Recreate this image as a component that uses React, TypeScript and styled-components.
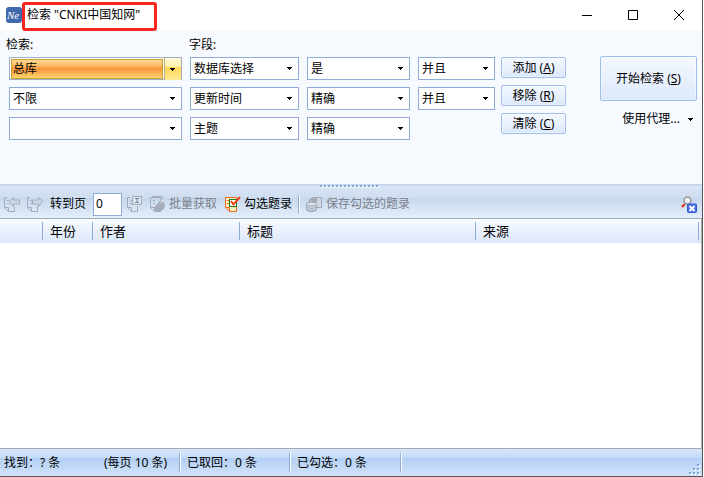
import React from 'react';
import styled, { createGlobalStyle } from 'styled-components';

const Global = createGlobalStyle`
  * { box-sizing: border-box; }
  body { margin: 0; background: #fff; }
  body, button, input, select {
    font: 12px/18px "Noto Sans", "Noto Sans CJK SC", sans-serif;
    color: #000;
  }
`;

const Window = styled.div`
  display: flex;
  flex-direction: column;
  min-height: 100vh;
  margin-right: 1px;
  border-right: 1px solid #555;
  border-bottom: 1px solid #555;
`;

const TitleBar = styled.header`
  display: flex;
  align-items: center;
  height: 30px;
  padding-left: 6px;
  background: #fff;
`;

const Title = styled.h1`
  position: relative;
  flex: 1;
  margin: 0 0 0 5px;
  font-size: 12px;
  font-weight: 400;
`;

const Highlight = styled.span`
  position: absolute;
  left: -5px;
  top: -4px;
  z-index: 1;
  width: 135px;
  height: 29px;
  border: 3px solid #f92620;
  border-radius: 3px;
  pointer-events: none;
`;

const WindowButton = styled.button`
  display: grid;
  place-items: center;
  width: 46px;
  height: 28px;
  padding: 0;
  border: 0;
  background: none;
`;

const SearchPanel = styled.section`
  display: flex;
  align-items: flex-start;
  height: 154px;
  padding: 6px 5px 0 9px;
  background: #f6f9fe;
`;

const Criteria = styled.div`
  flex: 1;
  display: grid;
  grid-template-columns: 173fr 109fr 103fr 77fr;
  grid-template-rows: 14px repeat(3, 23px);
  gap: 7px 8px;
`;

const Label = styled.label<{ $outdent?: boolean }>`
  margin-left: ${p => (p.$outdent ? '-3px' : '-1px')};
`;

const Combo = styled.div<{ $row: number; $active?: boolean }>`
  grid-row: ${p => p.$row};
  display: grid;
  min-width: 0;
  grid-template-columns: minmax(0, 1fr) 17px;
  border: 1px solid ${p => (p.$active ? '#9fb0c4' : '#8fabd8')};
  background: #fff;

  select {
    grid-area: 1 / 1 / 2 / 3;
    min-width: 0;
    appearance: none;
    margin: ${p => (p.$active ? '1px 18px 1px 1px' : '0')};
    padding: ${p => (p.$active ? '0 0 0 1px' : '0 0 0 3px')};
    border: ${p => (p.$active ? '1px solid #c9a22e' : '0')};
    border-radius: 0;
    outline: 0;
    background: ${p => (p.$active
      ? 'linear-gradient(#fbd794 0, #fcbd6a 30%, #f9973a 48%, #fbac50 68%, #fed56c 100%)'
      : 'transparent')};
  }
  svg { display: block; }
`;

const Arrow = styled.span<{ $active?: boolean }>`
  grid-area: 1 / 2;
  display: grid;
  place-items: center;
  padding-right: 1px;
  pointer-events: none;
  border-left: 1px solid ${p => (p.$active ? '#b9ad75' : 'transparent')};
  background: ${p => (p.$active
    ? 'linear-gradient(#fffad9 0, #ffefa9 40%, #ffd75a 42%, #ffe890 100%)'
    : 'transparent')};
`;

const ButtonColumn = styled.div`
  display: grid;
  gap: 7px;
  width: 65px;
  margin: 21px 34px 0 6px;
`;

const PushButton = styled.button<{ $large?: boolean }>`
  height: ${p => (p.$large ? '45px' : '21px')};
  padding: 0;
  border: 1px solid #9fbfea;
  border-radius: 2px;
  box-shadow: inset 0 0 0 1px #ffffff66;
  background: linear-gradient(#f4f8fe, #e9f1fd 50%, #dce8fa);
  white-space: nowrap;
`;

const StartColumn = styled.div`
  display: grid;
  gap: 9px;
  width: 97px;
  margin-top: 20px;
`;

const ProxyButton = styled.button`
  display: flex;
  align-items: center;
  justify-content: flex-end;
  gap: 8px;
  padding: 0 4px 0 0;
  border: 0;
  background: none;
`;

const Splitter = styled.div`
  display: flex;
  justify-content: center;
  height: 5px;
  padding-right: 2px;
  background: linear-gradient(#bccfe8, #dfe9f7 60%, #d5e2f3);
`;

const Toolbar = styled.div`
  display: flex;
  align-items: center;
  height: 30px;
  padding: 1px 5px 0 3px;
  border-bottom: 1px solid #a5a9b3;
  background: linear-gradient(#d5e2f3 0, #cfdef0 29%, #c7d8ed 31%, #e3eefb 100%);
`;

const ToolButton = styled.button<{ $gap?: number }>`
  display: flex;
  align-items: center;
  gap: 3px;
  margin-right: ${p => p.$gap ?? 6}px;
  padding: 0;
  border: 0;
  background: none;
  white-space: nowrap;
  &:disabled { color: #7c8088; }
`;

const PageInput = styled.input`
  width: 29px;
  height: 23px;
  margin: 0 4px 0 7px;
  padding: 0 0 1px 2px;
  border: 1px solid #8fabd8;
  outline: 0;
  background: #fff;
`;

const Divider = styled.span<{ $gap?: number }>`
  width: 2px;
  height: 19px;
  margin-right: ${p => p.$gap ?? 6}px;
  border-left: 1px solid #8fabd8;
  border-right: 1px solid #fff;
`;

const Spacer = styled.span`
  flex: 1;
`;

const Results = styled.main`
  flex: 1;
  border-right: 1px solid #b0b0b0;
  background: #fff;
`;

const Table = styled.table`
  width: 100%;
  table-layout: fixed;
  border-collapse: collapse;
  background: linear-gradient(#f8fbff, #dbe7fa);
`;

const HeadCell = styled.th<{ $width?: number }>`
  width: ${p => (p.$width ? `${p.$width}px` : 'auto')};
  height: 24px;
  padding: 3px 0;
  font-size: 13px;
  line-height: 18px;
  font-weight: 400;
  text-align: left;

  span {
    display: block;
    height: 18px;
    padding-left: 7px;
    border-right: 1px solid #8fabd8;
  }
  &:last-child span { margin-right: 2px; }
`;

const StatusBar = styled.footer`
  display: flex;
  align-items: center;
  height: 28px;
  padding: 0 2px 0 4px;
  border-top: 1px solid #a5a9b3;
  background: linear-gradient(#d7e5f8 0, #c7dcf7 31%, #b4d0f5 34%, #d1e3f9 100%);
`;

const StatusText = styled.span<{ $width: number }>`
  width: ${p => p.$width}px;
  padding-top: 1px;
  white-space: nowrap;
`;

const Grip = styled.svg`
  align-self: flex-end;
  margin-bottom: 1px;
`;

const Triangle = () => (
  <svg width="5" height="3" viewBox="0 0 5 3" shapeRendering="crispEdges" aria-hidden="true">
    <path d="M0 0h5v1H4v1H3v1H2V2H1V1H0z" />
  </svg>
);

const AppLogo = () => (
  <svg width="16" height="16" viewBox="0 0 16 16" aria-hidden="true">
    <rect width="16" height="16" rx="3" fill="#4167ad" />
    <text x="1" y="12" fill="#fff" fontFamily="Liberation Serif, serif" fontStyle="italic" fontSize="11">Ne</text>
  </svg>
);

const Page = ({ children }: { children?: React.ReactNode }) => (
  <svg width="17" height="17" viewBox="0 0 17 17" fill="none" stroke="#a3acb8" aria-hidden="true">
    <path d="M4 1.500H1.500v10l4 4h6v-5M1.500 11.500h4v4M4 4.500h2M4 7.500h2" />
    {children}
  </svg>
);

const PrevIcon = () => (
  <Page><path d="M6.500 5.500l4-4v2.500h6v4h-6v2.500z" fill="#cdd7e3" /></Page>
);

const NextIcon = () => (
  <Page><path d="M16.500 5.500l-4-4v2.500h-6v4h6v2.500z" fill="#cdd7e3" /></Page>
);

const GoIcon = () => (
  <Page>
    <rect x="6.500" y=".5" width="9" height="8" fill="#dce4ee" />
    <path d="M9 2.500h4M11 2.500v4M9 6.500h4" stroke="#7d8794" />
  </Page>
);

const BatchIcon = () => (
  <Page>
    <path d="M3.500 1.500v-1h10v3M4 1.500h7.500v4" />
    <path d="M6 13c-1-3 3-4 5-8 1 2-1 3 0 4 1-2 3-2 3-3 2 3 2 6-1 8-2 2-6 2-7-1z" fill="#a3acb8" />
  </Page>
);

const CheckIcon = () => (
  <svg width="17" height="17" viewBox="0 0 17 17" fill="none" aria-hidden="true">
    <path d="M1.500 1.500h11v14h-7l-4-4z" fill="#ffedc4" stroke="#ee6a1b" />
    <path d="M1.500 11.500h4v4M3 4.500h2M3 7.500h2" stroke="#ee6a1b" />
    <rect x="5.500" y="3.500" width="7" height="7" fill="#fff" stroke="#138413" />
    <path d="M7 5l2.500 3.500L16 1" stroke="#f0401c" strokeWidth="2" />
  </svg>
);

const SaveIcon = () => (
  <svg width="17" height="17" viewBox="0 0 17 17" fill="#cfd8e2" stroke="#a0a9b5" aria-hidden="true">
    <path d="M6.500 1.500h9v10h-6" />
    <path d="M.5 8v5c0 3.500 10 3.500 10 0V8" />
    <path d="M.5 10.500c1 2.500 9 2.500 10 0M.5 13c1 2.500 9 2.500 10 0" fill="none" />
    <ellipse cx="5.500" cy="8" rx="5" ry="2" fill="#dde4ec" />
    <path d="M3 7c0-4 3-6 6-4l1.500-1.500v5h-5l1.500-1.500c-2-1-3 0-4 2z" fill="#a0a9b5" />
  </svg>
);

const ClearSearchIcon = () => (
  <svg width="16" height="17" viewBox="0 0 16 17" fill="none" aria-hidden="true">
    <path d="M4 8L.8 11" stroke="#d43b16" strokeWidth="2" />
    <circle cx="6.500" cy="4.500" r="3.500" fill="#eef2f7" stroke="#93989e" strokeWidth="1.500" />
    <rect x="6.500" y="8" width="9" height="8.500" rx="1" fill="#4770e8" stroke="#3158d2" />
    <path d="M8.500 10l5 5M13.500 10l-5 5" stroke="#fff" strokeWidth="2" />
  </svg>
);

interface FieldSpec {
  row: number;
  value: string;
  name: string;
  id?: string;
  active?: boolean;
}

const fields: FieldSpec[] = [
  { row: 2, value: '总库', name: '检索词 1', id: 'term', active: true },
  { row: 2, value: '数据库选择', name: '字段 1', id: 'field' },
  { row: 2, value: '是', name: '匹配 1' },
  { row: 2, value: '并且', name: '逻辑 1' },
  { row: 3, value: '不限', name: '检索词 2' },
  { row: 3, value: '更新时间', name: '字段 2' },
  { row: 3, value: '精确', name: '匹配 2' },
  { row: 3, value: '并且', name: '逻辑 2' },
  { row: 4, value: '', name: '检索词 3' },
  { row: 4, value: '主题', name: '字段 3' },
  { row: 4, value: '精确', name: '匹配 3' },
];

const columns = [
  { title: '', width: 43 },
  { title: '年份', width: 50 },
  { title: '作者', width: 147 },
  { title: '标题', width: 236 },
  { title: '来源' },
];

const gripDots = [[8, 0], [4, 4], [8, 4], [0, 8], [4, 8], [8, 8]];

export default function App() {
  return (
    <Window>
      <Global />
      <TitleBar>
        <AppLogo />
        <Title>检索 "CNKI中国知网"<Highlight /></Title>
        <WindowButton aria-label="最小化">
          <svg width="10" height="10"><path d="M0 5.500h10" stroke="#000" /></svg>
        </WindowButton>
        <WindowButton aria-label="最大化">
          <svg width="10" height="10"><path d="M.5.5h9v9h-9z" fill="none" stroke="#000" /></svg>
        </WindowButton>
        <WindowButton aria-label="关闭">
          <svg width="10" height="10"><path d="M0 0l10 10M10 0L0 10" stroke="#000" /></svg>
        </WindowButton>
      </TitleBar>

      <SearchPanel>
        <Criteria>
          <Label $outdent htmlFor="term">检索:</Label>
          <Label htmlFor="field">字段:</Label>
          {fields.map(f => (
            <Combo key={f.name} $row={f.row} $active={f.active}>
              <select id={f.id} aria-label={f.id ? undefined : f.name} defaultValue={f.value}>
                <option value={f.value}>{f.value}</option>
              </select>
              <Arrow $active={f.active}><Triangle /></Arrow>
            </Combo>
          ))}
        </Criteria>
        <ButtonColumn>
          <PushButton>添加 (<u>A</u>)</PushButton>
          <PushButton>移除 (<u>R</u>)</PushButton>
          <PushButton>清除 (<u>C</u>)</PushButton>
        </ButtonColumn>
        <StartColumn>
          <PushButton $large>开始检索 (<u>S</u>)</PushButton>
          <ProxyButton>使用代理...<Triangle /></ProxyButton>
        </StartColumn>
      </SearchPanel>

      <Splitter>
        <svg width="60" height="4" shapeRendering="crispEdges" aria-hidden="true">
          <path d="M1 3h60" stroke="#fff" strokeWidth="2" strokeDasharray="2 2" />
          <path d="M0 2h60" stroke="#86a8d8" strokeWidth="2" strokeDasharray="2 2" />
        </svg>
      </Splitter>
      <Toolbar role="toolbar">
        <ToolButton disabled aria-label="上一页"><PrevIcon /></ToolButton>
        <ToolButton disabled $gap={7} aria-label="下一页"><NextIcon /></ToolButton>
        <label htmlFor="page">转到页</label>
        <PageInput id="page" defaultValue="0" />
        <ToolButton disabled aria-label="转到"><GoIcon /></ToolButton>
        <ToolButton disabled $gap={7}><BatchIcon />批量获取</ToolButton>
        <ToolButton><CheckIcon />勾选题录</ToolButton>
        <Divider />
        <ToolButton disabled><SaveIcon />保存勾选的题录</ToolButton>
        <Spacer />
        <ToolButton $gap={0} aria-label="清除搜索"><ClearSearchIcon /></ToolButton>
      </Toolbar>

      <Results>
        <Table>
          <thead>
            <tr>
              {columns.map(c => (
                <HeadCell key={c.title} $width={c.width} scope="col"><span>{c.title}</span></HeadCell>
              ))}
            </tr>
          </thead>
        </Table>
      </Results>

      <StatusBar>
        <StatusText $width={100}>找到：? 条</StatusText>
        <StatusText $width={75}>(每页 10 条)</StatusText>
        <Divider />
        <StatusText $width={102}>已取回：0 条</StatusText>
        <Divider />
        <StatusText $width={103}>已勾选：0 条</StatusText>
        <Divider />
        <Spacer />
        <Grip width="11" height="11" shapeRendering="crispEdges" aria-hidden="true">
          {gripDots.map(([x, y]) => (
            <g key={`${x}-${y}`}>
              <rect x={x + 1} y={y + 1} width="2" height="2" fill="#fff" />
              <rect x={x} y={y} width="2" height="2" fill="#7fa3d4" />
            </g>
          ))}
        </Grip>
      </StatusBar>
    </Window>
  );
}
